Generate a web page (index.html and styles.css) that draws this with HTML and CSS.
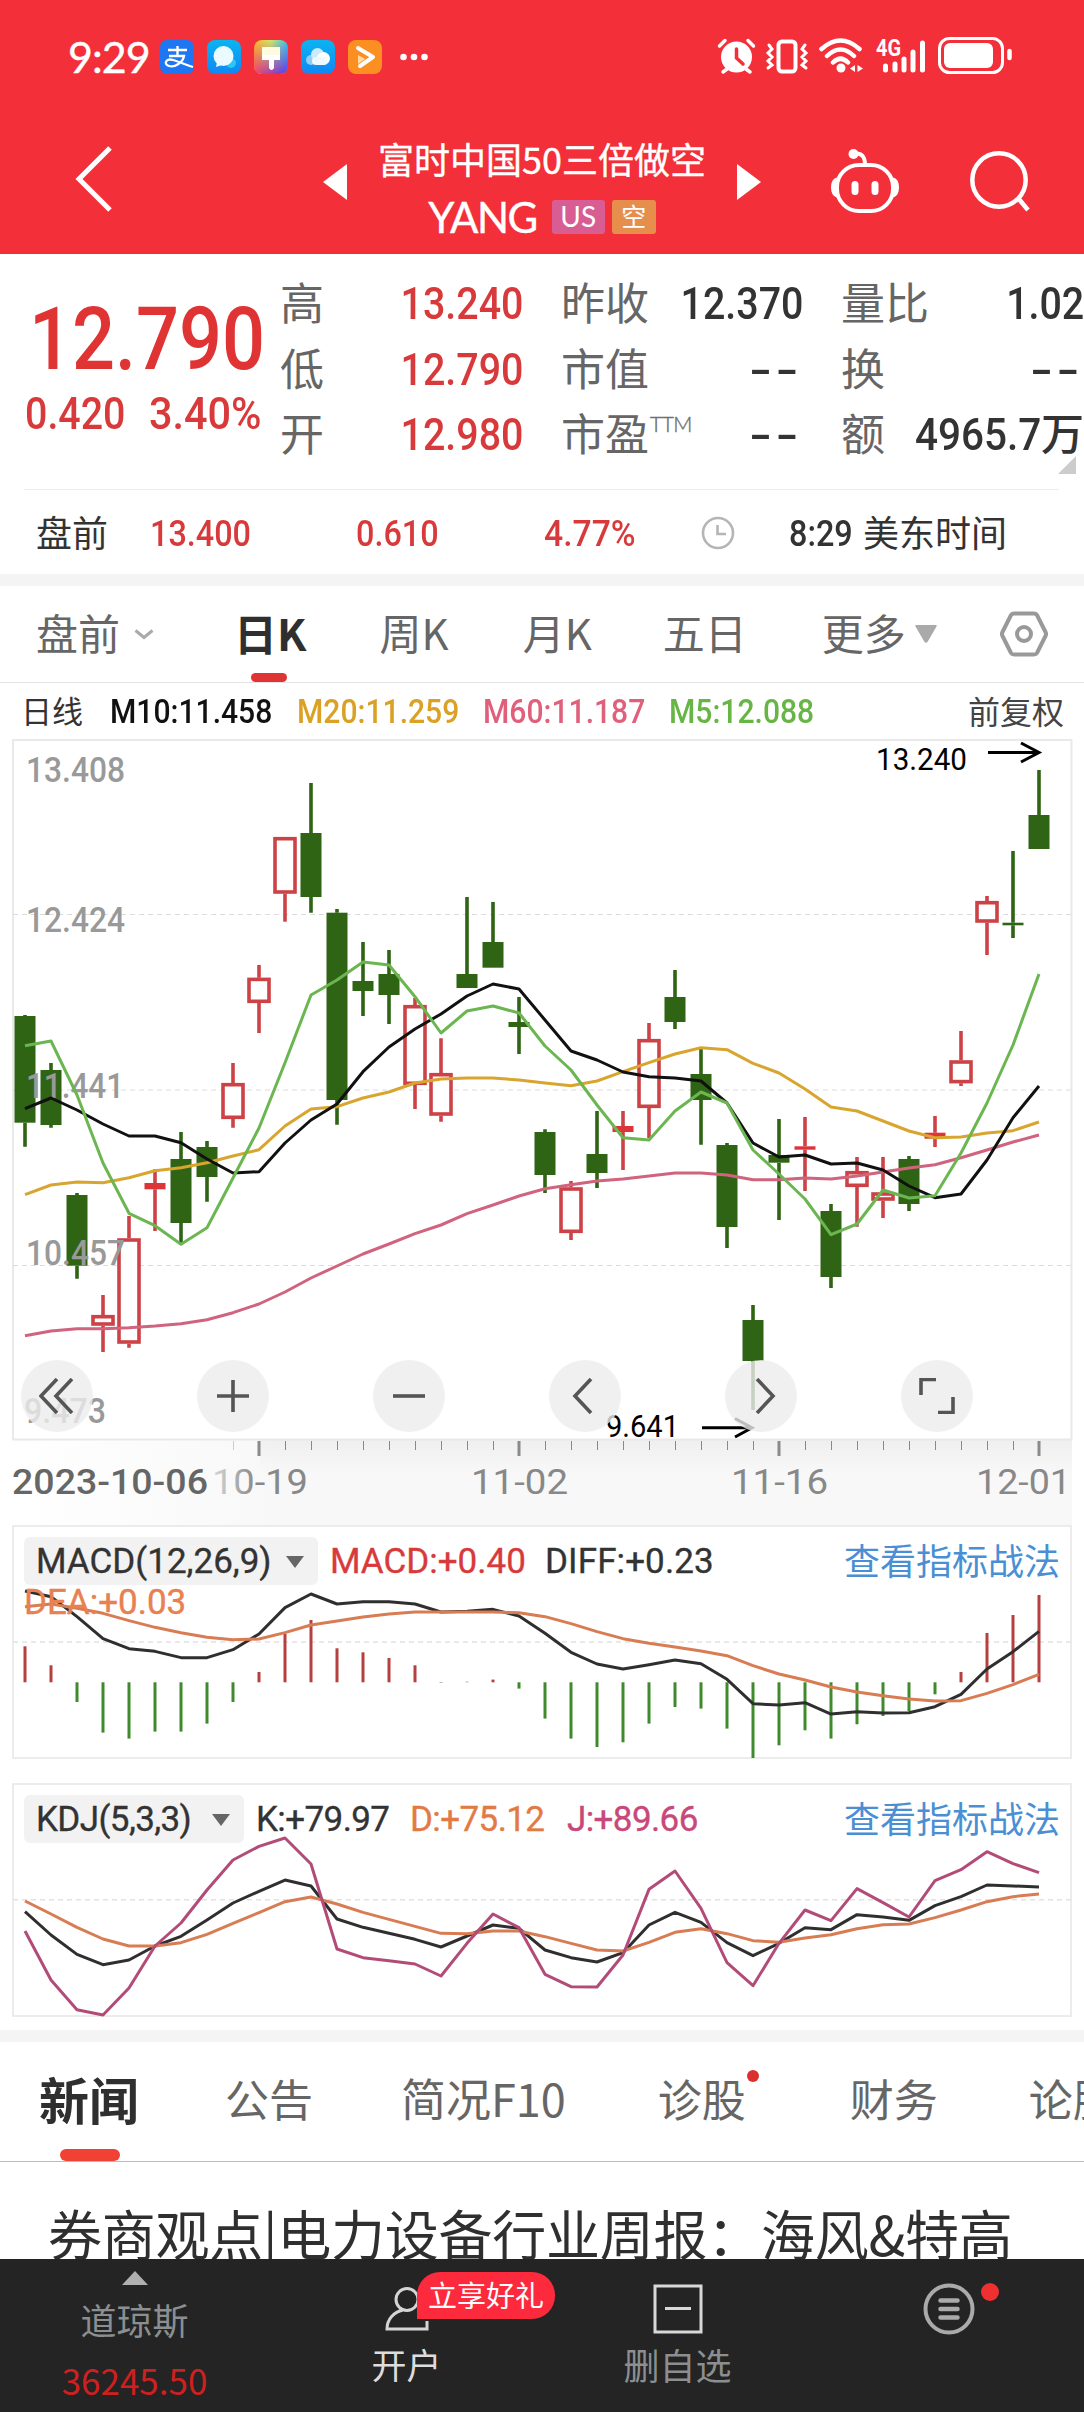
FILE: index.html
```html
<!DOCTYPE html>
<html lang="zh-CN">
<head>
<meta charset="utf-8">
<title>YANG 富时中国50三倍做空</title>
<link rel="stylesheet" href="styles.css">
</head>
<body>
<header class="top">
  <div class="status">
    <span class="clock">9:29</span>
    <div class="apps">
      <svg class="app" viewBox="0 0 34 34"><rect width="34" height="34" rx="7" fill="#1f76f3"/><path d="M8 10H27M17.500 6V16M9 16H24C23 22 15 28 9 26C3 24 6 18 13 20C20 22 26 25 33 27" fill="none" stroke="#fff" stroke-width="2.300"/></svg>
      <svg class="app" viewBox="0 0 34 34"><defs><linearGradient id="a1" x2="0" y2="1"><stop stop-color="#0bb4f0"/><stop offset="1" stop-color="#1187f5"/></linearGradient></defs><rect width="34" height="34" rx="8" fill="url(#a1)"/><circle cx="24" cy="23" r="5" fill="#27c8f2"/><circle cx="16.500" cy="16" r="10" fill="#eafaff"/><path d="M10 22L9 27L15 25Z" fill="#eafaff"/></svg>
      <svg class="app" viewBox="0 0 34 34"><defs><linearGradient id="a2" x2="1" y2="0"><stop stop-color="#ffb62e"/><stop offset=".5" stop-color="#c9e86a"/><stop offset="1" stop-color="#35c4f2"/></linearGradient><linearGradient id="a3" x2="1" y2="0"><stop stop-color="#f0426e"/><stop offset="1" stop-color="#5b3cf0"/></linearGradient><linearGradient id="a4" x2="0" y2="1"><stop stop-color="#fff" stop-opacity="0"/><stop offset="1" stop-color="#fff"/></linearGradient><mask id="m4"><rect width="34" height="34" fill="url(#a4)"/></mask></defs><rect width="34" height="34" rx="8" fill="url(#a2)"/><rect width="34" height="34" rx="8" fill="url(#a3)" mask="url(#m4)"/><path d="M8 7H26V15H8Z" fill="#fffbe0"/><path d="M8 15H26V20H20V28Q17.500 32 15 28V20H8Z" fill="#fff"/></svg>
      <svg class="app" viewBox="0 0 34 34"><rect width="34" height="34" rx="8" fill="url(#a1)"/><circle cx="10" cy="20" r="5" fill="#8fd0fa"/><circle cx="16.500" cy="14.500" r="6.500" fill="#c9ebfd"/><circle cx="22.500" cy="18.500" r="6.500" fill="#fff"/><rect x="11" y="17" width="15" height="8" rx="4" fill="#eefaff"/></svg>
      <svg class="app" viewBox="0 0 34 34"><rect width="34" height="34" rx="8" fill="#fb8f22"/><path d="M10 8L25 17L12 26" fill="none" stroke="#fff" stroke-width="4" stroke-linecap="round" stroke-linejoin="round"/><path d="M10 15V24L17 19Z" fill="#ffd9a0"/></svg>
    </div>
    <svg class="dots" viewBox="0 0 28 8"><g fill="#fff"><circle cx="3.500" cy="4" r="3.300"/><circle cx="14" cy="4" r="3.300"/><circle cx="24.500" cy="4" r="3.300"/></g></svg>
    <svg class="sys" viewBox="0 0 296 40">
      <g fill="none" stroke="#fff" stroke-linecap="round">
        <circle cx="19.500" cy="22" r="15.500" fill="#fff" stroke="none"/>
        <path d="M2.500 11L8 5.500M31 5.500L36.500 11M10 34L6 37M29 34L33 37" stroke-width="3.500"/>
        <path d="M19.500 14V23L26 29" stroke="#f32f39" stroke-width="3.500"/>
        <rect x="61.500" y="6.500" width="17" height="30" rx="3.500" stroke-width="4"/>
        <path d="M52 10L55 14L51 18L55 22L51 26L55 30L51 33M88 10L85 14L89 18L85 22L89 26L85 30L89 33" stroke-width="3"/>
        <path d="M104.500 14Q123.500-3 142.500 14M110 21Q123.500 8 137 21M116 27.500Q123.500 20 131 27.500" stroke-width="4.500"/>
        <circle cx="124" cy="33" r="4.500" fill="#fff" stroke="none"/>
        <path d="M138 30V37L133 33.500ZM140.500 30V37L146 33.500Z" fill="#fff" stroke="none"/>
        <path d="M168.500 31V35M178 29V35M187 24V35M196 17V35M205.500 8V35" stroke-width="5"/>
        <rect x="222.500" y="3.500" width="63" height="34" rx="10" stroke-width="3"/>
        <rect x="227" y="8" width="49" height="25" rx="6" fill="#fff" stroke="none"/>
        <path d="M292.500 16V23" stroke-width="4.500"/>
      </g>
      <text x="159" y="21" class="net" textLength="25" lengthAdjust="spacingAndGlyphs">4G</text>
    </svg>
  </div>
  <div class="titlebar">
    <svg class="back" viewBox="0 0 40 68"><path d="M35 3L4 34L35 65" fill="none" stroke="#fff" stroke-width="5"/></svg>
    <svg class="prev" viewBox="0 0 24 36"><path d="M24 0V36L0 18Z" fill="#fff"/></svg>
    <div class="title">
      <div class="name">富时中国50三倍做空</div>
      <div class="code"><span>YANG</span><i class="tag us">US</i><i class="tag short">空</i></div>
    </div>
    <svg class="next" viewBox="0 0 24 36"><path d="M0 0V36L24 18Z" fill="#fff"/></svg>
    <svg class="robot" viewBox="0 0 70 66"><g fill="none" stroke="#fff" stroke-width="4"><rect x="7" y="17" width="56" height="46" rx="22"/><path d="M35 17C35 9 32 5 25 5.500"/><path d="M7 31C1 33 1 46 7 48M63 31C69 33 69 46 63 48" fill="#fff" stroke-width="3"/></g><circle cx="23.500" cy="6" r="5" fill="#fff"/><rect x="21.500" y="33" width="7" height="14" rx="3.500" fill="#fff"/><rect x="41.500" y="33" width="7" height="14" rx="3.500" fill="#fff"/></svg>
    <svg class="search" viewBox="0 0 62 62"><g fill="none" stroke="#fff" stroke-width="4.500"><circle cx="30" cy="30" r="26.700"/><path d="M49 48L59 60"/></g></svg>
  </div>
</header>

<section class="quote">
  <div class="last">
    <div class="price"><span class="n">12.790</span></div>
    <div class="chg"><span class="n">0.420</span><span class="n pct">3.40%</span></div>
  </div>
  <dl class="stats">
    <dt>高</dt><dd class="up"><span class="n r">13.240</span></dd>
    <dt>昨收</dt><dd><span class="n r">12.370</span></dd>
    <dt>量比</dt><dd><span class="n r">1.02</span></dd>
    <dt>低</dt><dd class="up"><span class="n r">12.790</span></dd>
    <dt>市值</dt><dd><span class="dash">--</span></dd>
    <dt>换</dt><dd><span class="dash">--</span></dd>
    <dt>开</dt><dd class="up"><span class="n r">12.980</span></dd>
    <dt>市盈<sup>TTM</sup></dt><dd><span class="dash">--</span></dd>
    <dt>额</dt><dd><span class="n r amt">4965.7</span><span class="wan">万</span></dd>
  </dl>
  <i class="corner"></i>
</section>
<section class="premarket">
  <span class="cn">盘前</span><span class="n up">13.400</span><span class="n up">0.610</span><span class="n up pct">4.77%</span>
  <svg viewBox="0 0 34 34"><g fill="none" stroke="#b5b5b5" stroke-width="2.600"><circle cx="17" cy="17" r="15"/><path d="M16.500 9V18H25"/></g></svg>
  <span class="n">8:29</span><span class="cn">美东时间</span>
</section>

<nav class="periods">
  <span>盘前</span><svg class="chev" viewBox="0 0 20 11"><path d="M1.500 1.500L10 8.500L18.500 1.500" fill="none" stroke="#aaa" stroke-width="3"/></svg>
  <span class="on">日K</span><span class="week">周K</span><span class="month">月K</span><span class="five">五日</span><span class="more">更多</span>
  <svg class="caret" viewBox="0 0 22 18"><path d="M1 0H21Q22 0 21.500 1.500L12.500 17Q11 18.500 9.500 17L.5 1.500Q0 0 1 0" fill="#aaa"/></svg>
  <svg class="hex" viewBox="0 0 48 46"><g fill="none" stroke="#999" stroke-width="4"><path d="M14 2.500H34Q36 2.500 37 4L45.500 21Q46.500 23 45.500 25L37 42Q36 43.500 34 43.500H14Q12 43.500 11 42L2.500 25Q1.500 23 2.500 21L11 4Q12 2.500 14 2.500Z"/><circle cx="24" cy="23" r="7"/></g></svg>
</nav>
<div class="ma">
  <span class="cn">日线</span><span class="n k">M10:11.458</span><span class="n y">M20:11.259</span><span class="n p">M60:11.187</span><span class="n g">M5:12.088</span><span class="cn adj">前复权</span>
</div>

<section class="kline">
  <svg id="kchart" viewBox="0 730 1084 796"></svg>
  <div class="tools">
    <button><svg viewBox="0 0 36 36"><path d="M18 1L2 18L18 35M33 1L17 18L33 35"/></svg></button>
    <button><svg viewBox="0 0 36 36"><path d="M18 2V34M2 18H34"/></svg></button>
    <button><svg viewBox="0 0 36 36"><path d="M2 18H34"/></svg></button>
    <button><svg viewBox="0 0 36 36"><path d="M24 1L8 18L24 35"/></svg></button>
    <button><svg viewBox="0 0 36 36"><path d="M14 1L30 18L14 35"/></svg></button>
    <button><svg viewBox="0 0 36 36"><path d="M2 17V1.500H17M34 19V34.500H19"/></svg></button>
  </div>
</section>

<section class="panel macd">
  <svg id="macd" class="plot" viewBox="13 1525 1059 234"></svg>
  <div class="bar"><span class="pill">MACD(12,26,9)<i></i></span><span class="v1">MACD:+0.40</span><span class="v2">DIFF:+0.23</span><a>查看指标战法</a></div>
  <div class="dea">DEA:+0.03</div>
</section>
<section class="panel kdj">
  <svg id="kdj" class="plot" viewBox="13 1783 1059 234"></svg>
  <div class="bar"><span class="pill">KDJ(5,3,3)<i></i></span><span class="k1">K:+79.97</span><span class="k2">D:+75.12</span><span class="k3">J:+89.66</span><a>查看指标战法</a></div>
</section>

<nav class="newsTabs">
  <span class="on">新闻</span><span>公告</span><span class="brief">简况F10</span><span class="dot">诊股</span><span class="fin">财务</span><span class="forum">论股</span>
</nav>
<article class="headline">券商观点|电力设备行业周报：海风&amp;特高</article>

<footer class="dock">
  <div class="cell index"><i class="tri"></i><span>道琼斯</span><b>36245.50</b></div>
  <div class="cell open"><svg viewBox="0 0 44 44"><g fill="none" stroke="#d5d5d5" stroke-width="3"><circle cx="22" cy="12.500" r="11"/><path d="M18 23C9 25 2 32 2 42H42V34M18 23L15 21"/></g></svg><em>立享好礼</em><span>开户</span></div>
  <div class="cell del"><svg viewBox="0 0 50 50"><g fill="none" stroke="#d8d8d8" stroke-width="3"><rect x="2" y="2" width="46" height="46"/><path d="M12 24.500H38"/></g></svg><span>删自选</span></div>
  <div class="cell menu"><svg viewBox="0 0 52 52"><g fill="none" stroke="#aaa"><circle cx="26" cy="26" r="23.500" stroke-width="4"/><path d="M17.500 17.500H34.500M17.500 26H34.500M17.500 34.500H34.500" stroke-width="4.500" stroke-linecap="round"/></g></svg><u></u></div>
</footer>
<script src="charts.js"></script>
</body>
</html>
```
FILE: styles.css
```css
* { box-sizing: border-box; }
body {
  margin: 0;
  width: 1084px;
  height: 2412px;
  overflow: hidden;
  display: flex;
  flex-direction: column;
  background: #fff;
  color: #333;
  font-family: "Noto Sans CJK SC", sans-serif;
}
body > * { flex: none; }
svg { display: block; flex: none; }
i, em { font-style: normal; }

.n {
  display: inline-block;
  font-family: Roboto, "Liberation Sans", sans-serif;
  font-weight: 500;
  transform: scaleX(.875);
  transform-origin: 0 50%;
}
.n.r { transform-origin: 100% 50%; }
.up { color: #d83a3c; }

/* header */
.top { height: 254px; background: #f32f39; color: #fff; }
.status { height: 110px; padding-left: 68px; display: flex; align-items: center; }
.clock {
  width: 92px; font: 400 43px/50px Lato, sans-serif; letter-spacing: -1px; padding-top: 4px;
  -webkit-text-stroke: .4px #fff;
}
.apps { display: flex; gap: 13px; padding-top: 3px; }
.app { width: 34px; height: 34px; }
.dots { width: 28px; height: 8px; margin: 3px 0 0 18px; }
.sys { width: 296px; height: 40px; margin: 0 0 0 289px; }
.net { font: 700 23px Roboto, sans-serif; fill: #fff; }
.titlebar { height: 144px; display: flex; align-items: flex-start; }
.back { width: 40px; height: 68px; margin: 35px 0 0 75px; }
.prev { width: 24px; height: 36px; margin: 54px 0 0 208px; }
.title { width: 390px; display: flex; flex-direction: column; align-items: center; }
.name { height: 55px; margin-top: 22px; font-size: 36px; line-height: 52px; white-space: nowrap; -webkit-text-stroke: .4px #fff; }
.code { display: flex; align-items: center; height: 60px; }
.code span { font: 400 42px/58px Lato, sans-serif; letter-spacing: -1.5px; margin-right: 15px; -webkit-text-stroke: .4px #fff; }
.tag { height: 34px; border-radius: 3px; text-align: center; line-height: 33px; }
.us { width: 53px; background: #d85d92; font-family: Lato, sans-serif; font-size: 28px; }
.short { width: 44px; margin-left: 7px; background: #e68e4c; font-size: 25px; line-height: 31px; }
.next { width: 24px; height: 36px; margin-top: 54px; }
.robot { width: 70px; height: 66px; margin: 38px 0 0 69px; }
.search { width: 62px; height: 62px; margin: 40px 0 0 69px; }

/* quote */
.quote { position: relative; height: 235px; display: flex; }
.last { width: 280px; }
.price { margin: 26px 0 0 29px; height: 108px; font-size: 87px; line-height: 102px; color: #e03334; }
.price .n { transform: scaleX(.87); }
.chg { display: flex; height: 50px; font-size: 45px; line-height: 51px; margin-left: 25px; color: #d83a3c; }
.chg .n { width: 124px; }
.chg .pct { transform: scaleX(.92); }
.stats {
  margin: 17px 0 0; width: 804px; font-size: 44px;
  display: grid; grid-template-columns: 80px 163px 130px 150px 99px 182px; grid-auto-rows: 65.500px;
  line-height: 65px; white-space: nowrap;
}
.stats dt { color: #666; line-height: 60px; }
.stats dt:nth-of-type(3n+2) { padding-left: 38px; }
.stats dt:nth-of-type(3n) { padding-left: 38px; }
.stats dd { margin: 0; text-align: right; font-size: 45px; display: flex; justify-content: flex-end; }
.stats .amt { transform: scaleX(.9); }
.stats sup { font: 300 21px/20px Lato, sans-serif; letter-spacing: -.5px; vertical-align: 19px; margin-left: 1px; -webkit-text-stroke: .4px #777; }
.wan { font-size: 43px; font-weight: 500; width: 46px; line-height: 59px; }
.dash { display: inline-block; font: 500 45px/65px Roboto, sans-serif; letter-spacing: 3px; transform: scaleX(1.450); transform-origin: 100% 50%; }
.corner { position: absolute; left: 1058px; top: 202px; border-left: 18px solid transparent; border-bottom: 18px solid #ccc; }
.premarket {
  height: 97px; display: grid; align-items: center; padding: 0 0 10px 36px;
  grid-template-columns: 114px 206px 188px 157px 88px 74px 200px;
  font-size: 37px; white-space: nowrap;
  background: linear-gradient(#ededed, #ededed) 24px 0 / 1035px 1px no-repeat, linear-gradient(#f4f4f4, #f4f4f4) 0 85px / 100% 12px no-repeat;
}
.premarket .n { padding-top: 1px; }
.premarket .pct { transform: scaleX(.91); }
.premarket svg { width: 34px; height: 34px; }
.premarket .cn { font-size: 36px; line-height: 48px; padding-bottom: 4px; }

/* period tabs */
.periods {
  height: 97px; display: flex; align-items: center; padding: 0 0 0 36px;
  font-size: 42px; color: #666; border-bottom: 1px solid #e4e4e4; white-space: nowrap; line-height: 60px;
}
.periods span { position: relative; margin-bottom: 5px; }
.chev { width: 20px; height: 11px; margin: 0 83px 0 14px; }
.periods .on { color: #2f2f2f; font-weight: 700; margin-left: -3px; font-size: 43px; }
.periods .on::after { content: ""; position: absolute; left: 17px; top: 71px; width: 36px; height: 9px; border-radius: 5px; background: #e03334; }
.periods .week { margin-left: 73px; }
.periods .month { margin-left: 74px; }
.periods .five { margin-left: 71px; }
.periods .more { margin-left: 75px; }
.caret { width: 22px; height: 18px; margin-left: 9px; }
.hex { width: 48px; height: 46px; margin-left: 63px; }
.ma {
  height: 48px; padding: 5px 0 0 21px; display: grid; align-items: center;
  grid-template-columns: 89px 187px 186px 186px 299px auto; font-size: 34px; white-space: nowrap;
}
.ma .n { padding-top: 3px; transform: scaleX(.885); }
.ma .cn { font-size: 31px; line-height: 40px; }
.ma .adj { font-size: 32px; color: #444; }
.k { color: #111; } .y { color: #dba125; } .p { color: #e0607c; } .g { color: #67b545; }

/* candle chart */
.kline { position: relative; height: 796px; margin-top: -1px; }
#kchart { width: 1084px; height: 796px; }
#kchart text { font-family: Roboto, sans-serif; }
.tools { position: absolute; left: 21px; top: 630px; width: 952px; display: flex; justify-content: space-between; }
.tools button {
  width: 72px; height: 72px; padding: 0; border: 0; border-radius: 50%;
  background: rgba(236, 236, 236, .8); display: grid; place-items: center;
}
.tools svg { width: 36px; height: 36px; fill: none; stroke: #555; stroke-width: 3.600; }

/* indicator panels */
.panel { position: relative; margin-left: 12px; width: 1060px; height: 234px; border: 2px solid #ececec; margin-top: -1px; }
.kdj { margin-top: 24px; }
.plot { position: absolute; left: -1px; top: -2px; width: 1059px; height: 234px; }
.bar { position: relative; display: flex; align-items: center; margin: 10px 0 0 10px; height: 48px; font: 400 35px/51px Roboto, sans-serif; white-space: nowrap; -webkit-text-stroke: .35px currentColor; }
.bar span { padding-top: 1px; }
.pill { height: 48px; background: #f2f2f2; border-radius: 6px; display: flex; align-items: center; width: 294px; }
.bar .pill { padding: 1px 14px 0 12px; }
.kdj .pill { width: 220px; }
.pill i { margin-left: auto; border: 9px solid transparent; border-top: 12px solid #666; border-bottom: 0; }
.bar a { margin-left: auto; margin-right: 10px; padding-bottom: 4px; letter-spacing: 0; font: 400 36px/46px "Noto Sans CJK SC", sans-serif; color: #4a8fd4; -webkit-text-stroke: 0; }
.bar .v1 { margin-left: 12px; width: 215px; color: #d83a3c; }
.bar .v2 { letter-spacing: .1px; }
.kdj .bar { letter-spacing: -.6px; }
.bar .k1 { margin-left: 12px; width: 154px; }
.bar .k2 { width: 157px; color: #e27a45; }
.bar .k3 { color: #c9487a; }
.dea { position: relative; width: 200px; margin: -6px 0 0 10px; font: 400 35px/48px Roboto, sans-serif; color: #e8804f; -webkit-text-stroke: .4px currentColor; }

/* news */
.newsTabs {
  height: 132px; margin-top: 13px; border-top: 12px solid #f4f4f4; border-bottom: 1px solid #bbb;
  padding: 0 0 7px 39px; display: flex; align-items: center; font-size: 44px; line-height: 60px; color: #666; white-space: nowrap; overflow: hidden;
}
.newsTabs span { position: relative; margin-left: 86px; flex: none; }
.newsTabs .on { margin-left: 0; font-size: 50px; font-weight: 700; color: #2f2f2f; }
.newsTabs .on::after { content: ""; position: absolute; left: 21px; top: 81px; width: 60px; height: 12px; border-radius: 6px; background: #f04134; }
.newsTabs .brief { margin-left: 88px; font-size: 45px; }
.newsTabs .dot { margin-left: 92px; }
.newsTabs .fin { margin-left: 104px; }
.newsTabs .forum { margin-left: 91px; }
.newsTabs .dot::after { content: ""; position: absolute; left: 89px; top: 2px; width: 12px; height: 12px; border-radius: 50%; background: #dc3030; }
.headline { height: 97px; overflow: hidden; padding: 31px 0 0 48px; font-size: 54px; letter-spacing: -.25px; line-height: 80px; white-space: nowrap; color: #2f2f2f; }

/* dock */
.dock { height: 153px; background: #242424; display: grid; grid-template-columns: repeat(4, 271px); color: #8c8f90; font-size: 36px; }
.cell { position: relative; display: flex; flex-direction: column; align-items: center; line-height: 48px; }
.tri { margin-top: 12px; border: 13px solid transparent; border-bottom: 14px solid #b0b0b0; border-top: 0; }
.index { margin-right: 2px; }
.index span { margin-top: 10px; }
.index b { font: 400 35px/50px "Noto Sans CJK SC", sans-serif; color: #cf2020; margin-top: 12px; }
.open svg { width: 44px; height: 44px; margin: 28px 0 9px; }
.open span { color: #ddd; font-size: 35px; }
.open em { position: absolute; left: 146px; top: 13px; width: 138px; height: 47px; border-radius: 23px 23px 23px 0; background: #fd2a3e; color: #fff; font-size: 29px; line-height: 44px; text-align: center; }
.del svg { width: 50px; height: 50px; margin: 25px 0 6px; }
.menu svg { width: 52px; height: 52px; margin-top: 24px; }
.menu u { position: absolute; left: 168px; top: 24px; width: 18px; height: 18px; border-radius: 50%; background: #ee3030; }
```
FILE: charts.js
```js
// Candle i sits at x = 25 + 26 * i
const X = i => 25 + 26 * i;

// [rising, high, body top, body bottom, low]
const candles = [
  [0,1015,1016,1122.7,1146.7],[0,1063,1070,1125,1127.7],[0,1193,1195,1265.7,1278.7],[1,1295,1315,1325.7,1352],
  [1,1216,1238.3,1343.7,1347.7],[1,1169.3,1183,1189.3,1231],[0,1132,1159,1223,1243],[0,1141,1147,1177,1201.7],
  [1,1063,1083,1119,1127.7],[1,965,977.7,1003,1033],[1,837,837,893.7,921.7],[0,783,833,897,912.7],
  [0,909,912.7,1100,1124.7],[0,942,981,991,1016],[0,950,974,995,1024],[1,998,1005,1085,1109],
  [1,1038.3,1073,1115.7,1121.7],[0,897,974,988,988],[0,902,942,967.7,967.7],[0,997,1022,1027,1054],
  [0,1129.3,1132,1175,1193],[1,1181,1187.3,1233,1240],[0,1111,1154,1173,1188],[1,1111,1126,1132,1170],
  [1,1023,1039,1108,1138],[0,970,997,1022,1029],[0,1048,1074,1100,1144.7],[0,1143,1145,1227,1248],
  [0,1305,1320,1361,1410],[0,1119,1155,1162.7,1220],[1,1117,1146.3,1149.7,1191],[0,1204,1211,1277,1288],
  [1,1157,1171,1187,1226.7],[1,1157,1192.3,1200.7,1218],[0,1156,1159,1204,1211],[1,1116,1132.7,1138.7,1147],
  [1,1031,1060.3,1083.3,1086],[1,896,901,922.7,955],[0,851,922.7,925.3,938],[0,770,815,849,849]
];
const m5 = [1045.7,1041,1095,1163,1213.3,1225.7,1244.3,1227.7,1178,1128,1062.7,995,980,962,965,996.7,1033,1011,1006,1013,1046,1070,1105,1137.7,1140,1111,1092,1103,1150,1174,1199,1234.7,1224,1190,1198,1195.7,1153,1103,1045,974];
const m10 = [1108.7,1098,1110,1124,1136,1136,1142.7,1159,1173,1171.7,1143,1120,1104,1071.7,1047,1029,1014,996,984,989,1020,1051,1060,1072,1076.7,1078,1081,1103,1143,1157,1155,1164,1163,1170,1186,1197.7,1194,1160,1117.7,1086];
const m20 = [1194.7,1185,1182,1182.7,1177.7,1170.7,1167.7,1162.7,1156,1149.7,1126,1109,1106.7,1098,1092,1083,1079,1078,1078,1080,1083,1085.7,1081,1071.7,1062.7,1054,1047.7,1049.7,1063.3,1073,1089,1107,1111,1121,1131,1137.7,1137,1133,1130.7,1122];
const m60 = [1335.7,1331,1328.7,1328.7,1327.7,1326,1323.7,1319.7,1312.7,1304,1292,1278,1266,1254,1244,1233.7,1225,1213.7,1205,1196,1188.7,1184.7,1181,1179,1176,1173,1173,1175,1179.7,1179.7,1178,1179,1176,1172,1168,1164.7,1157.7,1150,1142,1135];

const line = (v, c, w = 3) =>
  `<polyline points="${v.map((y, i) => X(i) + ',' + y).join(' ')}" fill="none" stroke="${c}" stroke-width="${w}" stroke-linejoin="round"/>`;
const label = (x, y, w, s, fill, size = 35, weight = 500) =>
  `<text x="${x}" y="${y}" textLength="${w}" lengthAdjust="spacingAndGlyphs" fill="${fill}" font-size="${size}" font-weight="${weight}">${s}</text>`;

let k = `<defs>
<linearGradient id="band" x2="1" y2="0"><stop offset="0" stop-color="#fff"/><stop offset=".25" stop-color="#f8f8f8"/><stop offset="1" stop-color="#f8f8f8"/></linearGradient>
<linearGradient id="shade" x2="0" y2="1"><stop offset="0" stop-color="#000" stop-opacity=".035"/><stop offset=".4" stop-color="#000" stop-opacity="0"/></linearGradient>
<linearGradient id="fade" gradientUnits="userSpaceOnUse" x1="206" x2="256" y1="0" y2="0"><stop offset="0" stop-color="#e4e4e4"/><stop offset="1" stop-color="#888"/></linearGradient></defs>
<rect x="13" y="1440" width="1059" height="86" fill="url(#band)"/><rect x="260" y="1440" width="812" height="86" fill="url(#shade)"/>
<rect x="13" y="740" width="1058.500" height="699.500" fill="#fff" stroke="#e9e9e9" stroke-width="2"/>`;
for (const y of [914.5, 1090, 1265.5]) k += `<path d="M13 ${y}H1071" stroke="#dcdcdc" stroke-dasharray="5 4"/>`;
candles.forEach(([up, h, t, b, l], i) => {
  const x = X(i), c = up ? '#cc4246' : '#2f6414';
  k += `<path d="M${x} ${h}V${t}M${x} ${b}V${l}" stroke="${c}" stroke-width="3.600"/>`;
  if (up && b - t > 7) k += `<rect x="${x - 10}" y="${t + 1.7}" width="20" height="${b - t - 3.4}" fill="#fff" stroke="${c}" stroke-width="3.600"/>`;
  else k += `<rect x="${x - 10.5}" y="${t}" width="21" height="${b - t}" fill="${up ? '#dc3438' : c}"/>`;
});
k += label(26, 782, 99, '13.408', '#999') + label(26, 932, 99, '12.424', '#999') + label(26, 1098, 98, '11.441', '#999') +
     label(26, 1265, 99, '10.457', '#999') + label(24, 1423, 82, '9.473', '#999');
k += line(m60, '#d0637d') + line(m20, '#d8a52f') + line(m10, '#111') + line(m5, '#6cb651');
k += label(876, 770, 91, '13.240', '#000', 31, 400) + label(606, 1437, 73, '9.641', '#000', 31, 400);
k += `<path d="M988 752.500H1038M1021 743L1039 752.500L1021 762M702 1427.700H750M735 1418.500L752 1427.700L735 1437" fill="none" stroke="#000" stroke-width="3"/>`;
for (let i = 8; i < 40; i++) {
  const major = i % 10 === 9;
  k += `<path d="M${X(i) + (major ? 0 : .5)} 1441V${major ? 1456 : 1450}" stroke="${i === 8 ? '#ccc' : '#8a8a8a'}" stroke-width="${major ? 3 : 1}"/>`;
}
k += label(12, 1494, 196, '2023-10-06', '#666') + label(212, 1494, 96, '10-19', 'url(#fade)', 35, 400) +
     label(471, 1494, 97, '11-02', '#888', 35, 400) + label(731, 1494, 97, '11-16', '#888', 35, 400) + label(976, 1494, 95, '12-01', '#888', 35, 400);
document.getElementById('kchart').innerHTML = k;

// Indicator values are stored at three units per pixel from y = 1510
const P = v => v.map(y => 1510 + y / 3);
const bars = [36,17,-19.7,-50.3,-56.3,-49.3,-49.3,-41.3,-19.7,10.3,48.3,62.3,34,30,24.3,17,-.7,.7,2.7,-6.3,-36.3,-56.3,-64.7,-60,-41.3,-24.7,-26.3,-46.3,-75.7,-63,-48,-56.3,-42,-33.7,-28.7,-12,10.3,49.3,67.3,87.3];
const diff = P([243,260,320,386,416,424,443,443,419,372,293,252,282,275,275,282,306,304,298,318,370,427,462,477,464,450,461,508,581,585,578,612,605,609,608,590,553,477,425,364]);
const dea = P([290,282,295,310,332,352,368,382,389,387,368,345,333,321,312,306,306,306,306,308,320,341,365,386,400,411,423,437,467,492,510,531,546,557,567,573,572,550,524,493]);
const kv = P([1205,1275,1333,1364,1350,1308,1279,1230,1179,1144,1110,1128,1227,1252,1270,1288,1311,1278,1245,1255,1320,1343,1356,1328,1245,1207,1237,1298,1337,1300,1253,1259,1214,1221,1231,1187,1160,1125,1128,1131]);
const dv = P([1173,1212,1252,1287,1308,1308,1298,1273,1240,1208,1175,1161,1182,1207,1228,1249,1270,1271,1263,1263,1280,1300,1320,1323,1297,1267,1256,1271,1292,1297,1284,1274,1256,1244,1242,1223,1200,1175,1160,1152]);
const jv = P([1263,1410,1499,1515,1434,1308,1239,1140,1050,1009,984,1062,1317,1343,1352,1362,1398,1300,1212,1253,1393,1430,1431,1335,1138,1083,1195,1358,1427,1300,1200,1232,1136,1178,1221,1112,1079,1025,1061,1088]);
const grid = y => `<path d="M13 ${y}H1071" stroke="#e2e2e2" stroke-width="1.500" stroke-dasharray="5 4"/>`;

document.getElementById('macd').innerHTML = grid(1642) +
  bars.map((h, i) => `<path d="M${X(i)} 1682.300V${1682.3 - h}" stroke="${Math.abs(h) < 1 ? '#999' : h > 0 ? '#b5403f' : '#3f8a2d'}" stroke-width="3"/>`).join('') +
  line(diff, '#2f2f2f') + line(dea, '#d87c53');
document.getElementById('kdj').innerHTML = grid(1899.7) + line(kv, '#2f2f2f') + line(dv, '#d87c53') + line(jv, '#b34b78');
```
